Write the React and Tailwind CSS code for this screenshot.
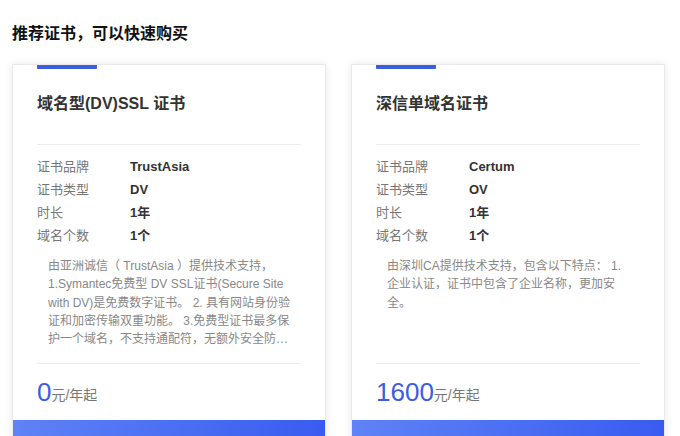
const certs = [
  {
    title: '域名型(DV)SSL 证书',
    brand: 'TrustAsia',
    type: 'DV',
    years: '1年',
    domains: '1个',
    desc: '由亚洲诚信（ TrustAsia ）提供技术支持， 1.Symantec免费型 DV SSL证书(Secure Site with DV)是免费数字证书。 2. 具有网站身份验证和加密传输双重功能。 3.免费型证书最多保护一个域名，不支持通配符，无额外安全防护，适合个人网站和测试环境使用。',
    price: '0',
  },
  {
    title: '深信单域名证书',
    brand: 'Certum',
    type: 'OV',
    years: '1年',
    domains: '1个',
    desc: '由深圳CA提供技术支持，包含以下特点： 1. 企业认证，证书中包含了企业名称，更加安全。',
    price: '1600',
  },
];

function CertCard({ cert }) {
  const rows = [
    ['证书品牌', cert.brand],
    ['证书类型', cert.type],
    ['时长', cert.years],
    ['域名个数', cert.domains],
  ];

  return (
    <div className="bg-white border border-[#e9e9ee] shadow-[0_0_8px_rgba(0,0,0,0.09)] flex flex-col">
      <div className="px-[24px]">
        <div className="w-[60px] h-[4px] bg-[#3d5ce2] rounded-b-[1px]" />
        <h2 className="mt-[23px] text-[16px] leading-6 font-semibold text-[#333]">{cert.title}</h2>
        <div className="mt-[28px] border-t border-[#ececf0]" />
        <div className="pt-[10px]">
          {rows.map(([label, value]) => (
            <div key={label} className="flex h-[23px] items-center text-[13px]">
              <span className="w-[93px] text-[#777]">{label}</span>
              <span className="font-bold text-[#333]">{value}</span>
            </div>
          ))}
        </div>
        <div className="mt-[10px] h-[92px] pl-[11px] pr-[4px]">
          <p className="text-[12px] leading-[18.25px] text-[#888] line-clamp-5">{cert.desc}</p>
        </div>
        <div className="mt-[14px] border-t border-[#ececf0]" />
        <div className="h-[56px] flex items-center">
          <span className="text-[26px] leading-none text-[#3d5ce2]">{cert.price}</span>
          <span className="text-[14px] text-[#777] self-center mt-[6px]">元/年起</span>
        </div>
      </div>
      <div className="h-[40px] bg-gradient-to-r from-[#5f82f6] to-[#3a5bf0]" />
    </div>
  );
}

export default function App() {
  return (
    <div className="bg-white min-h-screen pl-[12px] pr-[15px] pt-[22px] font-['Liberation_Sans','Noto_Sans_CJK_SC',sans-serif]">
      <h1 className="text-[16px] leading-6 font-bold text-[#111]">推荐证书，可以快速购买</h1>
      <div className="mt-[18px] grid grid-cols-2 gap-[25px]">
        {certs.map(c => (
          <CertCard key={c.title} cert={c} />
        ))}
      </div>
    </div>
  );
}
